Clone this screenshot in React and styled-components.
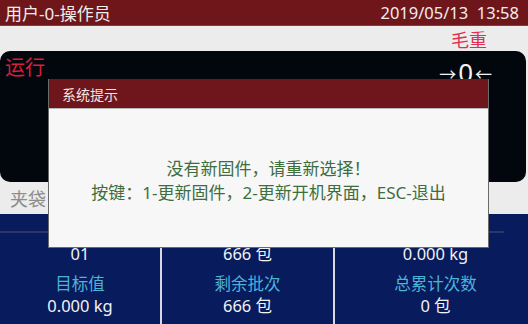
import styled, { createGlobalStyle } from "styled-components";

const GlobalStyle = createGlobalStyle`
  html, body {
    margin: 0;
    padding: 0;
    background: #ececec;
  }
  body {
    font-family: "Noto Sans", "Noto Sans CJK SC", sans-serif;
  }
`;

const columns = [
  { top: "01", label: "目标值", value: "0.000 kg" },
  { top: "666 包", label: "剩余批次", value: "666 包" },
  { top: "0.000 kg", label: "总累计次数", value: "0 包", offset: 8 },
];

export default function App() {
  return (
    <>
      <GlobalStyle />
      <Screen>
        <TopBar>
          <UserText>用户-0-操作员</UserText>
          <ClockText>2019/05/13&nbsp;&nbsp;13:58</ClockText>
        </TopBar>
        <ModeRow>
          <ModeText>毛重</ModeText>
        </ModeRow>
        <WeightPanel>
          <StatusText>运行</StatusText>
          <ZeroMark>
            <Arrow>→</Arrow>
            <Zero>0</Zero>
            <Arrow>←</Arrow>
          </ZeroMark>
        </WeightPanel>
        <SubBar>
          <SubText>夹袋</SubText>
        </SubBar>
        <InfoGrid>
          {columns.map((c, i) => (
            <InfoColumn key={i} $first={i === 0} $offset={c.offset || 0}>
              <Rule />
              <Value $gap>{c.top}</Value>
              <Label>{c.label}</Label>
              <Value>{c.value}</Value>
            </InfoColumn>
          ))}
        </InfoGrid>

        <Dialog>
          <DialogTitle>系统提示</DialogTitle>
          <DialogBody>
            <Message>没有新固件，请重新选择！</Message>
            <Message>按键：1-更新固件，2-更新开机界面，ESC-退出</Message>
          </DialogBody>
        </Dialog>
      </Screen>
    </>
  );
}

const Screen = styled.div`
  position: relative;
  width: 528px;
  height: 324px;
  overflow: hidden;
  display: flex;
  flex-direction: column;
  background: #ececec;
`;

const TopBar = styled.div`
  height: 26px;
  flex: none;
  background: #6f161b;
  color: #eeeeee;
  display: flex;
  align-items: center;
  justify-content: space-between;
  padding: 0 9px 0 5px;
  box-sizing: border-box;
  border-bottom: 1px solid #8a3a3e;
`;

const UserText = styled.span`
  font-size: 17px;
`;

const ClockText = styled.span`
  font-size: 16.5px;
`;

const ModeRow = styled.div`
  height: 25px;
  flex: none;
  display: flex;
  justify-content: flex-end;
  align-items: center;
  padding-right: 41px;
`;

const ModeText = styled.span`
  color: #e0304f;
  font-size: 18px;
  line-height: 1;
  margin-top: 3px;
`;

const WeightPanel = styled.div`
  height: 131px;
  flex: none;
  width: 526px;
  background: #02060d;
  border-radius: 10px;
  display: flex;
  justify-content: space-between;
  align-items: flex-start;
  padding: 4px 34px 0 5px;
  box-sizing: border-box;
`;

const StatusText = styled.span`
  color: #d81f3d;
  font-size: 20px;
  line-height: 26px;
`;

const ZeroMark = styled.div`
  display: flex;
  align-items: center;
  color: #f2f2f2;
  height: 30px;
  margin-top: 2px;
`;

const Arrow = styled.span`
  font-family: "Noto Sans CJK SC", sans-serif;
  font-size: 17px;
  line-height: 1;
  margin-top: 2px;
`;

const Zero = styled.span`
  font-size: 26px;
  line-height: 1;
  margin: 0 2px;
`;

const SubBar = styled.div`
  height: 32px;
  flex: none;
  display: flex;
  align-items: center;
  padding-left: 10px;
`;

const SubText = styled.span`
  color: #8c8c8c;
  font-size: 18px;
`;

const InfoGrid = styled.div`
  flex: 1;
  background: #081b5c;
  display: grid;
  grid-template-columns: 160px 173px 1fr;
`;

const InfoColumn = styled.div`
  display: flex;
  flex-direction: column;
  align-items: center;
  padding-top: 17px;
  padding-left: ${(p) => p.$offset}px;
  border-left: ${(p) => (p.$first ? "none" : "2px solid #d6d8e2")};
`;

const Rule = styled.div`
  align-self: stretch;
  height: 2px;
  background: #2a3768;
  margin: 0 24px 10px 0;
`;

const Value = styled.div`
  color: #f2f2f2;
  font-size: 16.5px;
  line-height: 22px;
  margin-bottom: ${(p) => (p.$gap ? "8px" : "0")};
`;

const Label = styled.div`
  color: #4cb4d6;
  font-size: 16.5px;
  line-height: 22px;
`;

const Dialog = styled.div`
  position: absolute;
  left: 48px;
  top: 79px;
  width: 441px;
  height: 169px;
  box-sizing: border-box;
  border: 1.5px solid #6a6a6a;
  border-top: none;
  background: #f7f7f7;
  display: flex;
  flex-direction: column;
`;

const DialogTitle = styled.div`
  height: 30px;
  flex: none;
  background: #6e161b;
  color: #f3e6e6;
  font-size: 14px;
  display: flex;
  align-items: center;
  padding-left: 13px;
  border-bottom: 1px solid #b9b9b9;
  box-sizing: border-box;
`;

const DialogBody = styled.div`
  flex: 1;
  display: flex;
  flex-direction: column;
  align-items: center;
  padding-top: 48px;
`;

const Message = styled.div`
  color: #3d6e3e;
  font-size: 17px;
  line-height: 24px;
`;
